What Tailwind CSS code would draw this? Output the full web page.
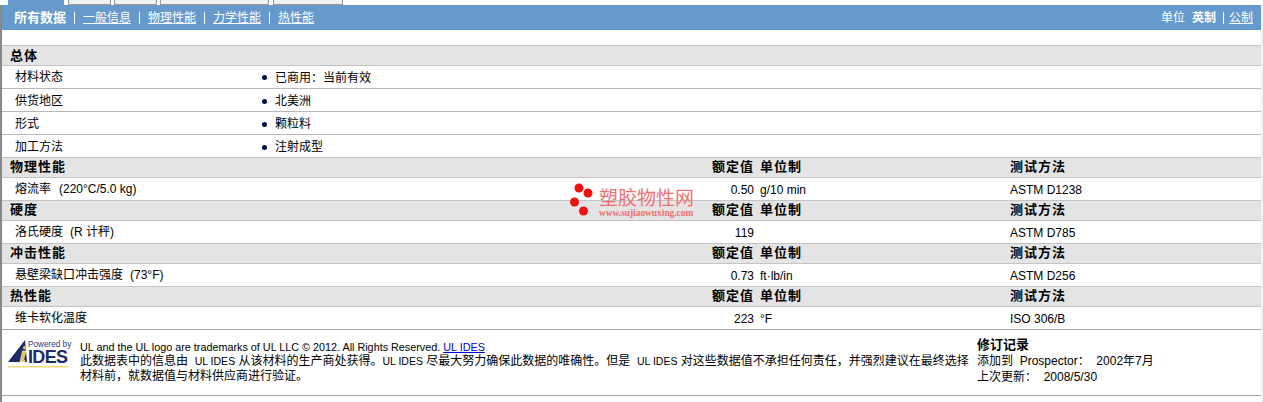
<!DOCTYPE html>
<html lang="zh">
<head>
  <meta charset="UTF-8">
  <title>塑胶物性</title>
  <script src="https://cdn.jsdelivr.net/npm/@tailwindcss/browser@4"></script>
</head>
<body class="bg-white">
<div class="relative w-[1263px] h-[402px] overflow-hidden bg-white text-[12px] text-black font-['Liberation_Sans','Noto_Sans_CJK_SC',sans-serif]">
  <!-- Tabs -->
  <div class="flex h-[5px] items-end">
    <div class="ml-[8px] w-[56px] h-[5px] bg-[#6699cc]"></div>
    <div class="ml-[4px] w-[43px] h-[5px] bg-[#f0f0f0] border-x border-b border-[#999]"></div>
    <div class="ml-[3px] w-[43px] h-[5px] bg-[#f0f0f0] border-x border-b border-[#999]"></div>
    <div class="ml-[3px] w-[109px] h-[5px] bg-[#f0f0f0] border-x border-b border-[#999]"></div>
    <div class="ml-[4px] w-[70px] h-[5px] bg-[#f0f0f0] border-x border-b border-[#999]"></div>
  </div>

  <div class="border-l-2 border-r-2 border-l-[#888] border-r-[#f2f2f2] h-[397px] w-[1263px]">
    <!-- Blue nav -->
    <div class="h-[25px] bg-[#6699cc] flex items-center justify-between pl-[12px] pr-[8px] text-white">
      <div class="flex items-center">
        <span class="font-bold text-[13px]">所有数据</span>
        <span class="mx-[8px] w-px h-[12px] bg-white"></span>
        <a class="underline">一般信息</a>
        <span class="mx-[8px] w-px h-[12px] bg-white"></span>
        <a class="underline">物理性能</a>
        <span class="mx-[8px] w-px h-[12px] bg-white"></span>
        <a class="underline">力学性能</a>
        <span class="mx-[8px] w-px h-[12px] bg-white"></span>
        <a class="underline">热性能</a>
      </div>
      <div class="flex items-center">
        <span>单位</span>
        <span class="ml-[7px] font-bold">英制</span>
        <span class="mx-[7px] w-px h-[12px] bg-white"></span>
        <a class="underline -ml-[2px]">公制</a>
      </div>
    </div>

    <div class="h-[15px]"></div>

    <!-- 总体 -->
    <div class="h-[21px] bg-[#e4e4e4] border-y border-[#c4c4c4] flex items-center pl-[8px] font-bold text-[13px] tracking-[1px]">总体</div>
    <div class="h-[23px] border-b border-[#b8b8b8] flex items-center">
      <span class="w-[258px] pl-[13px]">材料状态</span>
      <span class="w-[15px]"><span class="block ml-[2px] w-[5px] h-[5px] rounded-full bg-[#001040]"></span></span>
      <span>已商用<span class="font-['Noto_Sans_CJK_TC',sans-serif]">：</span>当前有效</span>
    </div>
    <div class="h-[23px] pt-[2px] border-b border-[#b8b8b8] flex items-center">
      <span class="w-[258px] pl-[13px]">供货地区</span>
      <span class="w-[15px]"><span class="block ml-[2px] w-[5px] h-[5px] rounded-full bg-[#001040]"></span></span>
      <span>北美洲</span>
    </div>
    <div class="h-[23px] pt-[2px] border-b border-[#b8b8b8] flex items-center">
      <span class="w-[258px] pl-[13px]">形式</span>
      <span class="w-[15px]"><span class="block ml-[2px] w-[5px] h-[5px] rounded-full bg-[#001040]"></span></span>
      <span>颗粒料</span>
    </div>
    <div class="h-[22px] pt-[2px] flex items-center">
      <span class="w-[258px] pl-[13px]">加工方法</span>
      <span class="w-[15px]"><span class="block ml-[2px] w-[5px] h-[5px] rounded-full bg-[#001040]"></span></span>
      <span>注射成型</span>
    </div>

    <!-- 物理性能 -->
    <div class="h-[21px] pb-[2px] bg-[#e4e4e4] border-y border-[#c4c4c4] flex items-center font-bold text-[13px] tracking-[1px]">
      <span class="w-[752px] pl-[8px] flex justify-between"><span>物理性能</span><span>额定值</span></span>
      <span class="ml-[6px] w-[250px]">单位制</span><span>测试方法</span>
    </div>
    <div class="h-[22px] flex items-center">
      <span class="w-[752px] pl-[13px] flex justify-between"><span>熔流率<span class="ml-[8px]">(220°C/5.0 kg)</span></span><span class="translate-y-px">0.50</span></span>
      <span class="ml-[6px] w-[250px] translate-y-px">g/10 min</span><span class="translate-y-px">ASTM D1238</span>
    </div>

    <!-- 硬度 -->
    <div class="h-[21px] pb-[2px] bg-[#e4e4e4] border-y border-[#c4c4c4] flex items-center font-bold text-[13px] tracking-[1px]">
      <span class="w-[752px] pl-[8px] flex justify-between"><span>硬度</span><span>额定值</span></span>
      <span class="ml-[6px] w-[250px]">单位制</span><span>测试方法</span>
    </div>
    <div class="h-[22px] flex items-center">
      <span class="w-[752px] pl-[13px] flex justify-between"><span>洛氏硬度<span class="ml-[7px]">(R 计秤)</span></span><span class="translate-y-px">119</span></span>
      <span class="ml-[6px] w-[250px]"></span><span class="translate-y-px">ASTM D785</span>
    </div>

    <!-- 冲击性能 -->
    <div class="h-[21px] pb-[2px] bg-[#e4e4e4] border-y border-[#c4c4c4] flex items-center font-bold text-[13px] tracking-[1px]">
      <span class="w-[752px] pl-[8px] flex justify-between"><span>冲击性能</span><span>额定值</span></span>
      <span class="ml-[6px] w-[250px]">单位制</span><span>测试方法</span>
    </div>
    <div class="h-[22px] flex items-center">
      <span class="w-[752px] pl-[13px] flex justify-between"><span>悬壁梁缺口冲击强度<span class="ml-[7px]">(73°F)</span></span><span class="translate-y-px">0.73</span></span>
      <span class="ml-[6px] w-[250px] translate-y-px">ft·lb/in</span><span class="translate-y-px">ASTM D256</span>
    </div>

    <!-- 热性能 -->
    <div class="h-[21px] pb-[2px] bg-[#e4e4e4] border-y border-[#c4c4c4] flex items-center font-bold text-[13px] tracking-[1px]">
      <span class="w-[752px] pl-[8px] flex justify-between"><span>热性能</span><span>额定值</span></span>
      <span class="ml-[6px] w-[250px]">单位制</span><span>测试方法</span>
    </div>
    <div class="h-[23px] border-b border-[#aaa] flex items-center">
      <span class="w-[752px] pl-[13px] flex justify-between"><span>维卡软化温度</span><span class="translate-y-px">223</span></span>
      <span class="ml-[6px] w-[250px] translate-y-px">°F</span><span class="translate-y-px">ISO 306/B</span>
    </div>

    <!-- Footer -->
    <div class="h-[66px] border-b border-[#aaa] flex">
      <div class="w-[78px] pl-[6px] pt-[10px]">
        <svg width="64" height="28" viewBox="0 0 64 28" class="block">
          <path d="M0 22 L17 0 L19 22 Z" fill="#1f2a66"/>
          <path d="M12 22 L14.5 11 L18 11 L15.5 20 L17 20 L16.5 22 Z" fill="#e8c23a" stroke="#fff" stroke-width="0.6"/>
          <circle cx="16.7" cy="7.8" r="1.8" fill="#e8c23a"/>
          <rect x="0" y="26" width="60" height="1.5" fill="#f2d878"/>
          <text x="20" y="6.5" font-size="8.2" fill="#2a3a7a" font-family="Liberation Sans">Powered by</text>
          <text x="20" y="23" font-size="18" font-weight="700" fill="#1f2a66" font-family="Liberation Sans" textLength="40">IDES</text>
        </svg>
      </div>
      <div class="w-[897px] pt-[10px] leading-[14px]">
        <div class="text-[10.8px]">UL and the UL logo are trademarks of UL LLC © 2012. All Rights Reserved. <a class="underline text-[#0000cc]">UL IDES</a></div>
        <div>此数据表中的信息由 &nbsp;<span class="text-[10.5px]">UL IDES</span> 从该材料的生产商处获得。<span class="text-[10.5px]">UL IDES</span> 尽最大努力确保此数据的唯确性。但是 &nbsp;<span class="text-[10.5px]">UL IDES</span> 对这些数据值不承担任何责任，并强烈建议在最终选择材料前<span class="font-['Noto_Sans_CJK_TC',sans-serif]">，</span>就数据值与材料供应商进行验证。</div>
      </div>
      <div class="pt-[7px] leading-[16px]">
        <div class="font-bold text-[13px]">修订记录</div>
        <div>添加到 &nbsp;Prospector： &nbsp;2002年7月</div>
        <div>上次更新： &nbsp;2008/5/30</div>
      </div>
    </div>
  </div>

  <!-- Watermark -->
  <div class="absolute left-[570px] top-[182px] flex items-start">
    <svg width="26" height="34" viewBox="0 0 26 34">
      <circle cx="9" cy="6" r="4.5" fill="#f01010"/>
      <circle cx="18" cy="11" r="4.5" fill="#f01010"/>
      <circle cx="4.5" cy="20" r="4.5" fill="#f01010"/>
      <circle cx="13.5" cy="29" r="4.5" fill="#f01010"/>
    </svg>
    <div class="ml-[3px] mt-[7px] text-[#f07070]">
      <div class="text-[19px] leading-[19px]">塑胶物性网</div>
      <div class="text-[9.4px] leading-[10px] font-bold font-['Liberation_Serif',serif]">www.sujiaowuxing.com</div>
    </div>
  </div>
</div>
</body>
</html>
